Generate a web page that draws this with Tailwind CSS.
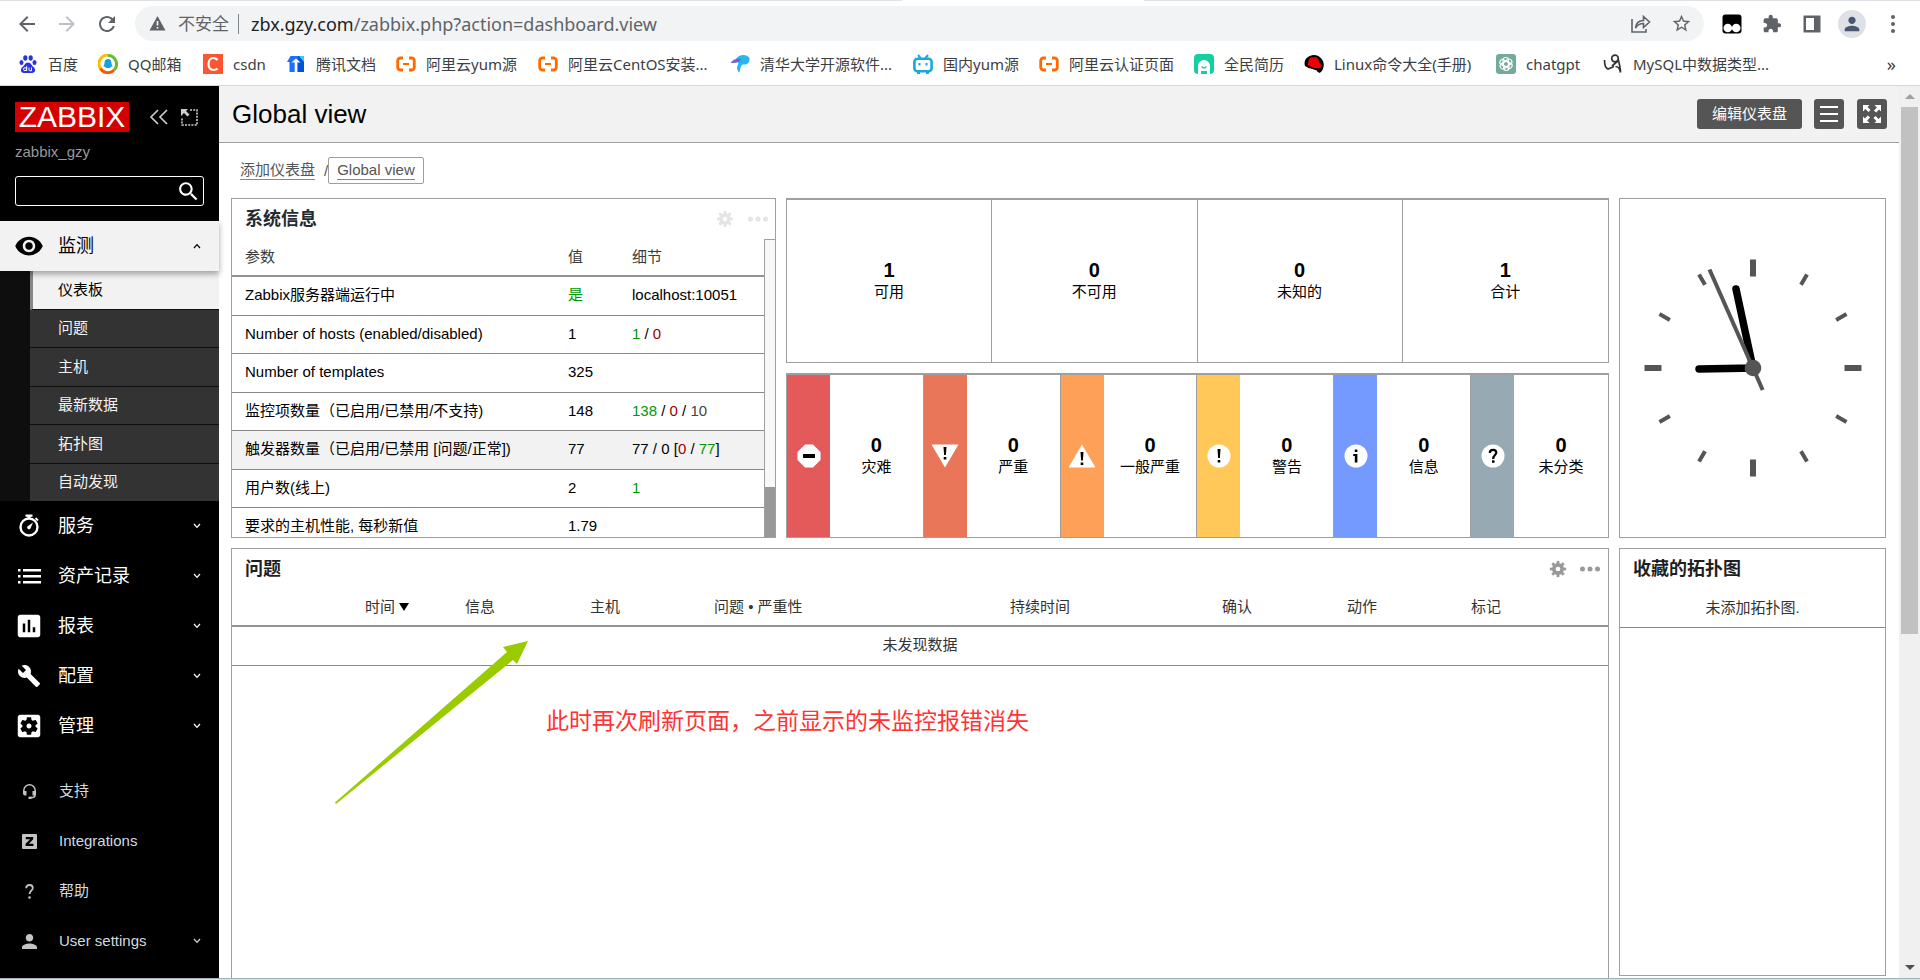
<!DOCTYPE html>
<html lang="zh-CN">
<head>
<meta charset="utf-8">
<title>Global view</title>
<script src="https://cdn.jsdelivr.net/npm/@tailwindcss/browser@4"></script>
</head>
<body class="flex h-screen flex-col overflow-hidden bg-white font-['Liberation_Sans','Noto_Sans_CJK_SC',sans-serif] text-[15px] leading-5 text-black">

<svg class="hidden">
  <symbol id="chev" viewBox="0 0 8 6"><path d="M1 1l3 3.400L7 1" fill="none" stroke="currentColor" stroke-width="1.200"/></symbol>
  <symbol id="ali" viewBox="0 0 20 20"><path d="M7 4H4.500A2.800 2.800 0 0 0 1.700 6.800v6.400A2.800 2.800 0 0 0 4.500 16H7M13 4h2.500a2.800 2.800 0 0 1 2.800 2.800v6.400a2.800 2.800 0 0 1-2.800 2.800H13" fill="none" stroke="#ff6a00" stroke-width="2.800"/><path d="M7 9h6v2H7z" fill="#ff6a00"/></symbol>
  <symbol id="gear" viewBox="0 0 20 20"><g fill="currentColor"><g id="teeth"><path d="M8.500 1h3v18h-3z"/><path d="M1 8.500h18v3H1z"/></g><use href="#teeth" transform="rotate(45 10 10)"/></g><circle cx="10" cy="10" r="4.700" fill="none" stroke="currentColor" stroke-width="4"/><circle cx="10" cy="10" r="2.600" fill="#fff"/></symbol>
  <symbol id="dots" viewBox="0 0 20 6"><g fill="currentColor"><circle cx="2.500" cy="3" r="2.500"/><circle cx="10" cy="3" r="2.500"/><circle cx="17.500" cy="3" r="2.500"/></g></symbol>
</svg>

<!-- Browser toolbar -->
<header class="shrink-0 border-b border-[#d5d7da] bg-white font-['Noto_Sans','Noto_Sans_CJK_SC',sans-serif]">
  <div class="flex h-px"><div class="w-[47%] bg-[#dee1e6]"></div><div class="w-[242px]"></div><div class="flex-1 bg-[#dee1e6]"></div></div>
  <div class="flex h-[45px] items-center pl-[15px] pr-5 text-[#5f6368]">
    <button aria-label="返回" class="w-10"><svg class="size-6" viewBox="0 0 24 24" fill="currentColor"><path d="M20 11H7.830l5.590-5.590L12 4l-8 8 8 8 1.410-1.410L7.830 13H20v-2z"/></svg></button>
    <button aria-label="前进" class="w-10 text-[#bdc1c6]"><svg class="size-6" viewBox="0 0 24 24" fill="currentColor"><path d="M12 4l-1.410 1.410L16.170 11H4v2h12.170l-5.580 5.590L12 20l8-8z"/></svg></button>
    <button aria-label="刷新" class="w-10"><svg class="size-6" viewBox="0 0 24 24" fill="currentColor"><path d="M17.650 6.350C16.200 4.900 14.210 4 12 4c-4.420 0-7.990 3.580-7.990 8s3.570 8 7.990 8c3.730 0 6.840-2.550 7.730-6h-2.080c-.82 2.330-3.040 4-5.650 4-3.310 0-6-2.690-6-6s2.690-6 6-6c1.660 0 3.140.69 4.220 1.780L13 11h7V4l-2.350 2.350z"/></svg></button>
    <div class="flex h-[35px] flex-1 items-center rounded-full bg-[#f1f3f4] pl-[14px] pr-3">
      <svg class="mr-3 size-[17px]" viewBox="0 0 17 17"><path d="M8.500 1L16.500 15.500H.5z" fill="#5f6368"/><path d="M7.700 6h1.600v4.500H7.700zM7.700 12h1.600v1.600H7.700z" fill="#fff"/></svg>
      <span class="text-[17px]">不安全</span>
      <span class="ml-[9px] mr-3 h-5 w-px bg-[#80868b]"></span>
      <span class="flex-1 whitespace-nowrap text-[18px] leading-6"><span class="text-[#202124]">zbx.gzy.com</span>/zabbix.php?action=dashboard.view</span>
      <button aria-label="分享" class="mr-[19px]"><svg class="size-[22px]" viewBox="0 0 22 22" fill="none" stroke="currentColor" stroke-width="1.600"><path d="M2 6v13h14v-3"/><path d="M5.500 15c.5-5 3.500-7.500 8-7.500V3.500l6 5.500-6 5.500v-4c-3.500 0-6 1-8 4.500z"/></svg></button>
      <button aria-label="收藏"><svg class="size-[21px]" viewBox="0 0 24 24" fill="currentColor"><path d="M22 9.240l-7.190-.62L12 2 9.190 8.630 2 9.240l5.460 4.730L5.820 21 12 17.270 18.180 21l-1.630-7.030L22 9.240zM12 15.400l-3.760 2.270 1-4.280-3.320-2.880 4.380-.38L12 6.100l1.710 4.040 4.380.38-3.320 2.880 1 4.280L12 15.400z"/></svg></button>
    </div>
    <div class="ml-[18px] flex items-center gap-5">
      <button aria-label="扩展"><svg class="size-5" viewBox="0 0 20 20"><rect x=".5" y=".5" width="19" height="19" rx="3"/><circle cx="5.800" cy="14" r="4.300" fill="#fff"/><circle cx="14.200" cy="14" r="4.300" fill="#fff"/></svg></button>
      <button aria-label="扩展程序"><svg class="size-5" viewBox="0 0 24 24" fill="currentColor"><path d="M20.500 11H19V7c0-1.100-.9-2-2-2h-4V3.500C13 2.120 11.880 1 10.500 1S8 2.120 8 3.500V5H4c-1.100 0-1.990.9-1.990 2v3.800H3.500c1.490 0 2.700 1.210 2.700 2.700s-1.210 2.700-2.700 2.700H2V20c0 1.100.9 2 2 2h3.800v-1.500c0-1.490 1.210-2.700 2.700-2.700 1.490 0 2.700 1.210 2.700 2.700V22H17c1.100 0 2-.9 2-2v-4h1.500c1.380 0 2.500-1.120 2.500-2.500S21.880 11 20.500 11z"/></svg></button>
      <button aria-label="侧边栏"><svg class="size-5" viewBox="0 0 20 20"><path d="M1.500 1.500h17v17h-17z" fill="currentColor"/><path d="M4 4h8v12H4z" fill="#fff"/></svg></button>
    </div>
    <button aria-label="用户" class="ml-4 grid size-7 place-items-center rounded-full bg-[#dee1e6] text-[#4a5670]"><svg class="size-[22px]" viewBox="0 0 24 24" fill="currentColor"><path d="M12 12c2.210 0 4-1.790 4-4s-1.790-4-4-4-4 1.790-4 4 1.790 4 4 4zm0 2c-2.670 0-8 1.340-8 4v2h16v-2c0-2.660-5.330-4-8-4z"/></svg></button>
    <button aria-label="菜单" class="ml-5"><svg class="h-5 w-[14px]" viewBox="0 0 14 20" fill="currentColor"><circle cx="7" cy="3" r="2"/><circle cx="7" cy="10" r="2"/><circle cx="7" cy="17" r="2"/></svg></button>
  </div>
  <nav class="flex h-[39px] items-center whitespace-nowrap pb-1 pl-[18px] pr-6 text-[15px] text-[#3c4043] [&_a]:flex [&_a]:shrink-0 [&_a]:items-center [&_a]:gap-[10px] [&_a_svg]:size-5 [&_a_svg]:shrink-0">
    <a href="#" class="w-20"><svg viewBox="0 0 20 20" fill="#2932e1"><ellipse cx="3.500" cy="8.500" rx="2" ry="2.600"/><ellipse cx="7.300" cy="4" rx="2.100" ry="2.800"/><ellipse cx="12.700" cy="4" rx="2.100" ry="2.800"/><ellipse cx="16.500" cy="8.500" rx="2" ry="2.600"/><path d="M10 8.500c-3 0-3.500 3-5.500 4.500-3 2.500-1.500 6 1.500 6h8c3 0 4.500-3.500 1.500-6-2-1.500-2.500-4.500-5.500-4.500z"/><g fill="none" stroke="#fff"><circle cx="7" cy="15.200" r="1.500"/><path d="M8.700 12v5M11 13.500v2.300q0 1 1 1h1.500v-3.300"/></g></svg>百度</a>
    <a href="#" class="w-[105px]"><svg viewBox="0 0 20 20"><path d="M3 15A8.500 8.500 0 0 1 12 1.500" fill="none" stroke="#fb0" stroke-width="3"/><path d="M10 1.500a8.500 8.500 0 0 1 6 14.500" fill="none" stroke="#6b3" stroke-width="3"/><path d="M16 16a8.500 8.500 0 0 1-13.500-1.500" fill="none" stroke="#f50" stroke-width="3"/><path d="M10 5c-3 0-3.500 2.500-3.500 4.500L5.500 13l1.500-.5L8 14h4l1-1.500 1.500.5-1-3.500C13.500 7.500 13 5 10 5z" fill="#18a0e0"/></svg>QQ邮箱</a>
    <a href="#" class="w-[83px]"><svg viewBox="0 0 20 20"><path d="M0 0h20v20H0z" fill="#fc5531"/><path d="M14.500 6Q13 4 10.500 4C7 4 5.500 7 5.500 10s1.500 6 5 6q2.500 0 4-1.500" fill="none" stroke="#fff" stroke-width="2.200"/></svg>csdn</a>
    <a href="#" class="w-[110px]"><svg viewBox="0 0 20 20"><path d="M4.500 2H12v16H3.500V8H1z" fill="#1e6fff"/><path d="M12 2h2l4 4v12h-6z" fill="#0052d9"/><path d="M13 2h5v6z" fill="#31d0e8"/><path d="M5.500 8.500L10 4.500l4.500 4H11.300V18H8.700V8.500z" fill="#fff"/></svg>腾讯文档</a>
    <a href="#" class="w-[142px]"><svg><use href="#ali"/></svg>阿里云yum源</a>
    <a href="#" class="w-[192px]"><svg><use href="#ali"/></svg>阿里云CentOS安装...</a>
    <a href="#" class="w-[183px]"><svg viewBox="0 0 20 20"><path d="M6 5C9 0 17 0 19.500 4c.5 4-2 7-6 6.500-3 0-3 4-4 8-3-2-3-6-1-9z" fill="#25b6f5"/><path d="M.5 9C3 5 7 4 11 5c-1 4-6 4-10.500 4z" fill="#7d5fc4"/></svg>清华大学开源软件...</a>
    <a href="#" class="w-[126px]"><svg viewBox="0 0 20 20" fill="none" stroke="#19a8e0" stroke-width="2.600"><rect x="1.400" y="4.800" width="17.200" height="12.500" rx="3"/><path d="M5 1l2.500 3M15 1l-2.500 3M6.500 9v2.500M13.500 9v2.500M4 19h3M13 19h3" stroke-width="2"/></svg>国内yum源</a>
    <a href="#" class="w-[155px]"><svg><use href="#ali"/></svg>阿里云认证页面</a>
    <a href="#" class="w-[110px]"><svg viewBox="0 0 20 20"><rect width="20" height="20" rx="4" fill="#14d0a0"/><path d="M4 20v-8a6 6 0 0 1 12 0v8h-3v-3H7v3z" fill="#fff"/><path d="M7.500 12.500q2.500 3 5 0" fill="none" stroke="#14d0a0" stroke-width="1.300"/></svg>全民简历</a>
    <a href="#" class="w-[192px]"><svg viewBox="0 0 20 20"><path d="M1 12C-1 6 4 1 10 1s11 6 9.500 12c-.5 3-2 5-4 6l-3-2-4-1-4-2z"/><path d="M4 11c0-4 1-7 3.500-7.500C9 3 9 4 11 3c3-.5 4 4 4.500 6 1 1 2.500 2 2 4-3 2.500-11 1-15-3z" fill="#e00"/><path d="M5 14l8 2.500-1 2.500-3-1-1 1z" fill="#fff"/></svg>Linux命令大全(手册)</a>
    <a href="#" class="w-[107px]"><svg viewBox="0 0 20 20"><rect width="20" height="20" rx="3" fill="#74aa9c"/><g fill="none" stroke="#fff" stroke-width="1.100"><rect id="petal" x="7" y="3.500" width="5.500" height="9.500" rx="2.700"/><use href="#petal" transform="rotate(60 10 10)"/><use href="#petal" transform="rotate(120 10 10)"/><use href="#petal" transform="rotate(180 10 10)"/><use href="#petal" transform="rotate(240 10 10)"/><use href="#petal" transform="rotate(300 10 10)"/></g></svg>chatgpt</a>
    <a href="#" class="w-[168px]"><svg viewBox="0 0 20 20" fill="none" stroke="#333" stroke-width="1.700"><path d="M1.500 6c0 5 1 8 3.500 9l6-2.500"/><circle cx="12" cy="4.500" r="3.300"/><path d="M9 12l6.500-5.500c1 4 2 8 2 12-.5-3-2-6-5-6"/></svg>MySQL中数据类型...</a>
    <button aria-label="更多书签" class="ml-auto text-lg">»</button>
  </nav>
</header>

<div class="flex min-h-0 flex-1">
  <!-- Sidebar -->
  <aside class="flex w-[219px] shrink-0 flex-col bg-black text-white">
    <div class="flex h-[135px] flex-col px-[15px] pt-4">
      <div class="flex items-center">
        <a href="#" class="flex h-[30px] w-[114px] items-center justify-center bg-[#d40000] text-[30px] leading-none">ZABBIX</a>
        <button aria-label="折叠" class="ml-5"><svg class="h-4 w-5" viewBox="0 0 20 16" fill="none" stroke="#ccc" stroke-width="1.700"><path d="M9 1L2 8l7 7M18 1l-7 7 7 7"/></svg></button>
        <button aria-label="隐藏" class="ml-3"><svg class="size-[17px]" viewBox="0 0 17 17"><path d="M9 1h7v15H1V9" fill="none" stroke="#ccc" stroke-width="1.600" stroke-dasharray="2 1.200"/><path d="M0 0h7L5 2l3.500 3.500-2 2L3 4 0 7z" fill="#ccc"/></svg></button>
      </div>
      <div class="mt-[10px] text-[#999]">zabbix_gzy</div>
      <form class="mt-[14px] flex h-[30px] w-full items-center rounded-[3px] border border-white">
        <input type="search" aria-label="搜索" class="h-full min-w-0 flex-1 bg-transparent px-2 outline-none">
        <button type="button" aria-label="搜索" class="mr-[2px]"><svg class="size-[25px]" viewBox="0 0 24 24" fill="currentColor"><path d="M15.500 14h-.79l-.28-.27C15.410 12.590 16 11.110 16 9.500 16 5.910 13.090 3 9.500 3S3 5.910 3 9.500 5.910 16 9.500 16c1.610 0 3.090-.59 4.230-1.570l.27.28v.79l5 4.990L20.490 19l-4.990-5zm-6 0C7.010 14 5 11.990 5 9.500S7.010 5 9.500 5 14 7.010 14 9.500 11.990 14 9.500 14z"/></svg></button>
      </form>
    </div>
    <nav class="text-[18px]">
      <a href="#" class="relative flex h-[50px] items-center bg-[#f2f2f2] pl-[14px] pr-[18px] text-black shadow-[0_3px_6px_rgba(0,0,0,0.35)]"><svg class="mr-[14px] size-[30px]" viewBox="0 0 24 24"><path d="M12 4.500C7 4.500 2.730 7.610 1 12c1.730 4.390 6 7.500 11 7.500s9.270-3.110 11-7.500c-1.730-4.390-6-7.500-11-7.500zM12 17c-2.760 0-5-2.240-5-5s2.240-5 5-5 5 2.240 5 5-2.240 5-5 5zm0-8c-1.660 0-3 1.340-3 3s1.340 3 3 3 3-1.340 3-3-1.340-3-3-3z"/></svg>监测<svg class="ml-auto h-[6px] w-2 rotate-180"><use href="#chev"/></svg></a>
      <div class="flex h-[230px] flex-col bg-[#0e0e0e] pl-[30px] text-[15px] text-[#f2f2f2]">
        <a href="#" class="flex flex-1 items-center border-b border-l-3 border-b-[#0e0e0e] border-l-[#888] bg-[#f2f2f2] pl-[25px] text-black">仪表板</a>
        <a href="#" class="flex flex-1 items-center border-b border-[#0e0e0e] bg-[#333] pl-7">问题</a>
        <a href="#" class="flex flex-1 items-center border-b border-[#0e0e0e] bg-[#333] pl-7">主机</a>
        <a href="#" class="flex flex-1 items-center border-b border-[#0e0e0e] bg-[#333] pl-7">最新数据</a>
        <a href="#" class="flex flex-1 items-center border-b border-[#0e0e0e] bg-[#333] pl-7">拓扑图</a>
        <a href="#" class="flex flex-1 items-center bg-[#333] pl-7">自动发现</a>
      </div>
      <a href="#" class="flex h-[50px] items-center pl-[14px] pr-[18px]"><svg class="mr-[14px] size-[30px]" viewBox="0 0 30 30"><circle cx="15" cy="16" r="8.500" fill="none" stroke="currentColor" stroke-width="2.400"/><path d="M11.500 3.500h7v2.200h-2V8h-3V5.700h-2z" fill="currentColor"/><path d="M21.500 7l2.500 2.500" stroke="currentColor" stroke-width="1.800"/><path d="M19 11.500l-2.300 5.500a1.800 1.800 0 1 1-2.700-2z" fill="currentColor"/></svg>服务<svg class="ml-auto h-[6px] w-2"><use href="#chev"/></svg></a>
      <a href="#" class="flex h-[50px] items-center pl-[14px] pr-[18px]"><svg class="mr-[14px] size-[30px]" viewBox="0 0 30 30" fill="currentColor"><path d="M4 8h2.500v2.500H4zM4 14h2.500v2.500H4zM4 20h2.500v2.500H4zM9 8h18v2.500H9zM9 14h18v2.500H9zM9 20h18v2.500H9z"/></svg>资产记录<svg class="ml-auto h-[6px] w-2"><use href="#chev"/></svg></a>
      <a href="#" class="flex h-[50px] items-center pl-[14px] pr-[18px]"><svg class="mr-[14px] size-[30px]" viewBox="0 0 24 24" fill="currentColor"><path d="M19 3H5c-1.100 0-2 .9-2 2v14c0 1.100.9 2 2 2h14c1.100 0 2-.9 2-2V5c0-1.100-.9-2-2-2zM9 17H7v-7h2v7zm4 0h-2V7h2v10zm4 0h-2v-4h2v4z"/></svg>报表<svg class="ml-auto h-[6px] w-2"><use href="#chev"/></svg></a>
      <a href="#" class="flex h-[50px] items-center pl-[14px] pr-[18px]"><svg class="ml-[3px] mr-[17px] size-6" viewBox="0 0 24 24" fill="currentColor"><path d="M22.700 19l-9.100-9.100c.9-2.300.4-5-1.500-6.900-2-2-5-2.400-7.400-1.300L9 6 6 9 1.600 4.700C.4 7.100.9 10.100 2.900 12.100c1.900 1.900 4.600 2.400 6.900 1.500l9.100 9.100c.4.400 1 .4 1.400 0l2.300-2.300c.5-.4.5-1.100.1-1.400z"/></svg>配置<svg class="ml-auto h-[6px] w-2"><use href="#chev"/></svg></a>
      <a href="#" class="flex h-[50px] items-center pl-[14px] pr-[18px]"><svg class="mr-[14px] size-[30px]" viewBox="0 0 24 24" fill="currentColor"><path d="M12 10c-1.100 0-2 .9-2 2s.9 2 2 2 2-.9 2-2-.9-2-2-2zm7-7H5c-1.110 0-2 .9-2 2v14c0 1.100.89 2 2 2h14c1.110 0 2-.9 2-2V5c0-1.100-.89-2-2-2zm-1.750 9c0 .23-.02.46-.05.68l1.480 1.160c.13.11.17.3.08.45l-1.400 2.420c-.09.15-.27.21-.43.15l-1.740-.7c-.36.28-.76.51-1.180.69l-.26 1.850c-.03.17-.18.3-.35.3h-2.800c-.17 0-.32-.13-.35-.29l-.26-1.850c-.43-.18-.82-.41-1.180-.69l-1.740.7c-.16.06-.34 0-.43-.15l-1.400-2.420c-.09-.15-.05-.34.08-.45l1.480-1.160c-.03-.23-.05-.46-.05-.69s.02-.46.05-.68l-1.480-1.160c-.13-.11-.17-.3-.08-.45l1.400-2.420c.09-.15.27-.21.43-.15l1.740.7c.36-.28.76-.51 1.180-.69l.26-1.850c.03-.17.18-.3.35-.3h2.800c.17 0 .32.13.35.29l.26 1.850c.43.18.82.41 1.180.69l1.740-.7c.16-.06.34 0 .43.15l1.400 2.420c.09.15.05.34-.08.45l-1.480 1.160c.03.23.05.46.05.69z"/></svg>管理<svg class="ml-auto h-[6px] w-2"><use href="#chev"/></svg></a>
    </nav>
    <nav class="mt-auto mb-3 text-[#cfdbe2]">
      <a href="#" class="flex h-[50px] items-center pl-[22px] pr-[18px]"><svg class="mr-[22px] size-[15px]" viewBox="0 0 15 15" fill="#c4c4c4"><path d="M1.800 9V6.500a5.700 5.700 0 0 1 11.400 0v4q0 3-3 3H7.500" fill="none" stroke="#c4c4c4" stroke-width="1.500"/><path d="M1 7h3.500v4.500H3Q1 11.500 1 9.500zM10.500 7H14v2.500q0 2-2 2h-1.500zM6.500 12.700h3V15h-3z"/></svg>支持</a>
      <a href="#" class="flex h-[50px] items-center pl-[22px] pr-[18px]"><svg class="mr-[22px] size-[15px]" viewBox="0 0 15 15"><rect width="15" height="15" rx="1" fill="#c4c4c4"/><path d="M3.800 3h7.400v2.200L7 9.800h4.400V12H3.600V9.800L8 5.200H3.800z"/></svg>Integrations</a>
      <a href="#" class="flex h-[50px] items-center pl-[22px] pr-[18px]"><svg class="mr-[22px] size-[15px]" viewBox="0 0 15 15"><path d="M4.200 4.200C4.200 2 5.600 1 7.500 1s3.300 1 3.300 3c0 2.500-3.300 2.800-3.300 6" fill="none" stroke="#c4c4c4" stroke-width="1.800"/><circle cx="7.500" cy="13.500" r="1.300" fill="#c4c4c4"/></svg>帮助</a>
      <a href="#" class="flex h-[50px] items-center pl-[22px] pr-[18px]"><svg class="mr-[22px] size-[15px]" viewBox="4 4 16 16" fill="#c4c4c4"><path d="M12 12c2.210 0 4-1.790 4-4s-1.790-4-4-4-4 1.790-4 4 1.790 4 4 4zm0 2c-2.670 0-8 1.340-8 4v2h16v-2c0-2.660-5.330-4-8-4z"/></svg>User settings<svg class="ml-auto h-[6px] w-2"><use href="#chev"/></svg></a>
    </nav>
  </aside>

  <main class="min-w-0 flex-1 overflow-hidden">
    <div class="flex h-[57px] items-center border-b border-[#9f9f9f] bg-[#f2f2f2] pl-[13px] pr-3">
      <h1 class="mr-auto text-[26px] leading-8">Global view</h1>
      <button class="h-[30px] rounded-[3px] bg-[#555] px-[15px] text-white">编辑仪表盘</button>
      <button aria-label="操作" class="ml-3 grid size-[30px] place-items-center rounded-[3px] bg-[#555]"><svg class="size-[18px]" viewBox="0 0 18 18" fill="none" stroke="#fff" stroke-width="2"><path d="M0 2h18M0 9h18M0 16h18"/></svg></button>
      <button aria-label="全屏" class="ml-[13px] grid size-[30px] place-items-center rounded-[3px] bg-[#555]"><svg class="size-[18px]" viewBox="0 0 18 18"><g fill="#fff"><path id="corner" d="M0 0h6.500L4.600 1.900l3 3-2.200 2.200-3-3L0 6.500z"/><use href="#corner" transform="rotate(90 9 9)"/><use href="#corner" transform="rotate(180 9 9)"/><use href="#corner" transform="rotate(270 9 9)"/></g></svg></button>
    </div>
    <div class="flex h-[55px] items-center pl-[21px] text-[#555]">
      <a href="#" class="border-b border-[#888] leading-[18px]">添加仪表盘</a>
      <span class="ml-[9px]">/</span>
      <span class="flex h-[27px] items-center rounded-[2px] border border-[#9f9f9f] px-2"><a href="#" class="border-b border-[#888] leading-[18px]">Global view</a></span>
    </div>

    <div class="grid grid-cols-[545fr_823fr_267fr] grid-rows-[340px_428px] gap-[10px] pl-3 pr-[13px]">
      <!-- System information -->
      <section class="flex min-w-0 flex-col overflow-hidden border border-[#9f9f9f]">
        <div class="flex h-10 shrink-0 items-center pb-px pl-[13px] pr-[7px] text-[#e5e5e5]">
          <h2 class="mr-auto text-[18px] font-bold text-[#1f2c33]">系统信息</h2>
          <button aria-label="编辑"><svg class="size-[18px]"><use href="#gear"/></svg></button>
          <button aria-label="更多" class="ml-[14px]"><svg class="h-[6px] w-5"><use href="#dots"/></svg></button>
        </div>
        <div class="flex min-h-0 flex-1">
          <div class="min-w-0 flex-1 overflow-hidden">
            <table class="w-full table-fixed border-collapse text-left [&_td]:pb-px [&_td]:pl-[13px] [&_th]:pl-[13px] [&_th]:font-normal [&_tbody_tr]:border-b [&_tbody_tr]:border-[#888] [&_tbody_tr:nth-child(odd)]:h-[39px] [&_tbody_tr:nth-child(even)]:h-[38px]">
              <colgroup><col><col class="w-16"><col class="w-[145px]"></colgroup>
              <thead><tr class="h-[37px] border-b-2 border-[#909494] text-[#3c3c3c]"><th>参数</th><th>值</th><th>细节</th></tr></thead>
              <tbody>
                <tr><td>Zabbix服务器端运行中</td><td class="text-[#009900]">是</td><td>localhost:10051</td></tr>
                <tr><td>Number of hosts (enabled/disabled)</td><td>1</td><td><span class="text-[#009900]">1</span> / <span class="text-[#990000]">0</span></td></tr>
                <tr><td>Number of templates</td><td>325</td><td></td></tr>
                <tr><td>监控项数量（已启用/已禁用/不支持)</td><td>148</td><td><span class="text-[#009900]">138</span> / <span class="text-[#990000]">0</span> / <span class="text-[#444]">10</span></td></tr>
                <tr class="bg-[#f2f2f2]"><td>触发器数量（已启用/已禁用 [问题/正常])</td><td>77</td><td>77 / 0 [<span class="text-[#990000]">0</span> / <span class="text-[#009900]">77</span>]</td></tr>
                <tr><td>用户数(线上)</td><td>2</td><td class="text-[#009900]">1</td></tr>
                <tr><td>要求的主机性能, 每秒新值</td><td>1.79</td><td></td></tr>
              </tbody>
            </table>
          </div>
          <div class="flex w-[11px] flex-col border-l border-t border-[#9f9f9f] bg-[#f8f8f8]"><div class="mt-auto h-[50px] bg-[#999]"></div></div>
        </div>
      </section>

      <div class="flex min-w-0 flex-col gap-[10px] text-center">
        <!-- Host availability -->
        <section class="grid flex-1 grid-cols-4 divide-x divide-[#9f9f9f] border border-t-2 border-[#9f9f9f]">
          <div class="flex flex-col justify-center pb-[3px]"><b class="text-xl leading-6">1</b><span>可用</span></div>
          <div class="flex flex-col justify-center pb-[3px]"><b class="text-xl leading-6">0</b><span>不可用</span></div>
          <div class="flex flex-col justify-center pb-[3px]"><b class="text-xl leading-6">0</b><span>未知的</span></div>
          <div class="flex flex-col justify-center pb-[3px]"><b class="text-xl leading-6">1</b><span>合计</span></div>
        </section>
        <!-- Problems by severity -->
        <section class="grid flex-1 grid-cols-6 divide-x divide-[#9f9f9f] border border-t-2 border-[#9f9f9f]">
          <div class="flex"><div class="grid w-[43px] place-items-center bg-[#e45959]"><svg class="size-6" viewBox="0 0 24 24"><path d="M8 .5h8L23.500 8v8L16 23.500H8L.5 16V8z" fill="#fff"/><path d="M6 10h12v4H6z"/></svg></div><div class="flex flex-1 flex-col justify-center pb-[3px]"><b class="text-xl leading-6">0</b><span>灾难</span></div></div>
          <div class="flex"><div class="grid w-[43px] place-items-center bg-[#e97659]"><svg class="h-6 w-[28px]" viewBox="0 0 28 24"><path d="M.5.5h27L14 23.500z" fill="#fff"/><path d="M12.500 3h3l-.6 8h-1.800zM12.700 13h2.600v2.600h-2.600z"/></svg></div><div class="flex flex-1 flex-col justify-center pb-[3px]"><b class="text-xl leading-6">0</b><span>严重</span></div></div>
          <div class="flex"><div class="grid w-[43px] place-items-center bg-[#ffa059]"><svg class="h-6 w-[28px]" viewBox="0 0 28 24"><path d="M.5 23.500h27L14 .5z" fill="#fff"/><path d="M12.500 8h3l-.6 8.500h-1.800zM12.700 18.500h2.600v2.600h-2.600z"/></svg></div><div class="flex flex-1 flex-col justify-center pb-[3px]"><b class="text-xl leading-6">0</b><span>一般严重</span></div></div>
          <div class="flex"><div class="grid w-[43px] place-items-center bg-[#ffc859]"><svg class="size-6" viewBox="0 0 24 24"><circle cx="12" cy="12" r="11.500" fill="#fff"/><path d="M10.500 5h3l-.6 9h-1.800zM10.700 16h2.600v2.600h-2.600z"/></svg></div><div class="flex flex-1 flex-col justify-center pb-[3px]"><b class="text-xl leading-6">0</b><span>警告</span></div></div>
          <div class="flex"><div class="grid w-[43px] place-items-center bg-[#7499ff]"><svg class="size-6" viewBox="0 0 24 24"><circle cx="12" cy="12" r="11.500" fill="#fff"/><path d="M10.800 5.500h2.600v2.500h-2.600zM9.200 10h4.200v8.500h-2.600V12H9.200z"/></svg></div><div class="flex flex-1 flex-col justify-center pb-[3px]"><b class="text-xl leading-6">0</b><span>信息</span></div></div>
          <div class="flex"><div class="grid w-[43px] place-items-center bg-[#97aab3]"><svg class="size-6" viewBox="0 0 24 24"><circle cx="12" cy="12" r="11.500" fill="#fff"/><path d="M8.800 9c0-2.200 1.300-3.200 3.300-3.200s3.200 1.100 3.200 2.800c0 2.500-3.100 2.600-3.100 6.400" fill="none" stroke="#000" stroke-width="2.200"/><path d="M11 16.300h2.500v2.500H11z"/></svg></div><div class="flex flex-1 flex-col justify-center pb-[3px]"><b class="text-xl leading-6">0</b><span>未分类</span></div></div>
        </section>
      </div>

      <!-- Clock -->
      <section class="grid place-items-center border border-[#9f9f9f]">
        <svg class="size-[218px]" viewBox="-109 -109 218 218" stroke="#555">
          <g stroke-width="6"><path d="M0-108.500v17M0 91.500v17M-108.500 0h17M91.500 0h17"/></g>
          <g id="ticks" stroke-width="4"><path d="M0-108v12M0 96v12" transform="rotate(30)"/><path d="M0-108v12M0 96v12" transform="rotate(60)"/><path d="M0-108v12M0 96v12" transform="rotate(120)"/><path d="M0-108v12M0 96v12" transform="rotate(150)"/></g>
          <path d="M-17-79L0 0L-54 1" fill="none" stroke="#000" stroke-width="7.500" stroke-linecap="round"/>
          <path d="M-43.500-98.500L9.700 22" stroke-width="4"/>
          <circle r="8.300" fill="#555" stroke="none"/>
        </svg>
      </section>

      <!-- Problems -->
      <section class="relative col-span-2 h-[520px] border border-[#9f9f9f]">
        <div class="flex h-10 items-center pb-px pl-[13px] pr-2 text-[#999]">
          <h2 class="mr-auto text-[18px] font-bold text-[#1f1f1f]">问题</h2>
          <button aria-label="编辑"><svg class="size-[18px]"><use href="#gear"/></svg></button>
          <button aria-label="更多" class="ml-[13px]"><svg class="h-[6px] w-5"><use href="#dots"/></svg></button>
        </div>
        <table class="w-full table-fixed border-collapse text-left text-[#333] [&_th]:font-normal">
          <colgroup><col class="w-[133px]"><col class="w-[100px]"><col class="w-[125px]"><col class="w-[124px]"><col class="w-[296px]"><col class="w-[212px]"><col class="w-[125px]"><col class="w-[124px]"><col></colgroup>
          <thead><tr class="h-[37px] border-b-2 border-[#909494]"><th></th><th><span class="flex items-center gap-1">时间<svg class="h-2 w-[10px]" viewBox="0 0 10 8"><path d="M0 0h10L5 8z"/></svg></span></th><th>信息</th><th>主机</th><th>问题 • 严重性</th><th>持续时间</th><th>确认</th><th>动作</th><th>标记</th></tr></thead>
          <tbody><tr class="h-[39px] border-b border-[#888]"><td colspan="9" class="pb-px text-center">未发现数据</td></tr></tbody>
        </table>
        <svg class="absolute left-[100px] top-[90px] h-[170px] w-[200px]" viewBox="0 0 200 170"><path d="M3 163.500L175 13L171 8L196 2L185 25L181 21L4 165z" fill="#9c0"/></svg>
        <p class="absolute left-[314px] top-[157px] text-[23px] leading-[30px] text-[#ff3333]">此时再次刷新页面，之前显示的未监控报错消失</p>
      </section>

      <!-- Favourite maps -->
      <section class="border border-[#9f9f9f]">
        <h2 class="flex h-10 items-center pb-px pl-[13px] text-[18px] font-bold text-[#1f1f1f]">收藏的拓扑图</h2>
        <p class="flex h-[39px] items-center justify-center border-b border-[#888] text-[#333]">未添加拓扑图.</p>
      </section>
    </div>
  </main>

  <!-- Page scrollbar -->
  <div class="flex w-[21px] shrink-0 flex-col items-center bg-[#f0f0f0]">
    <svg class="my-2 h-[5px] w-[10px]" viewBox="0 0 10 5"><path d="M0 5h10L5 0z" fill="#a0a0a0"/></svg>
    <div class="h-[527px] w-[17px] bg-[#c1c1c1]"></div>
    <svg class="mt-auto mb-2 h-[5px] w-[10px]" viewBox="0 0 10 5"><path d="M0 0h10L5 5z" fill="#505050"/></svg>
  </div>
</div>
<div class="h-[2px] shrink-0 border-t border-[#9cb5b8] bg-[#c9e6ea]"></div>
</body>
</html>
